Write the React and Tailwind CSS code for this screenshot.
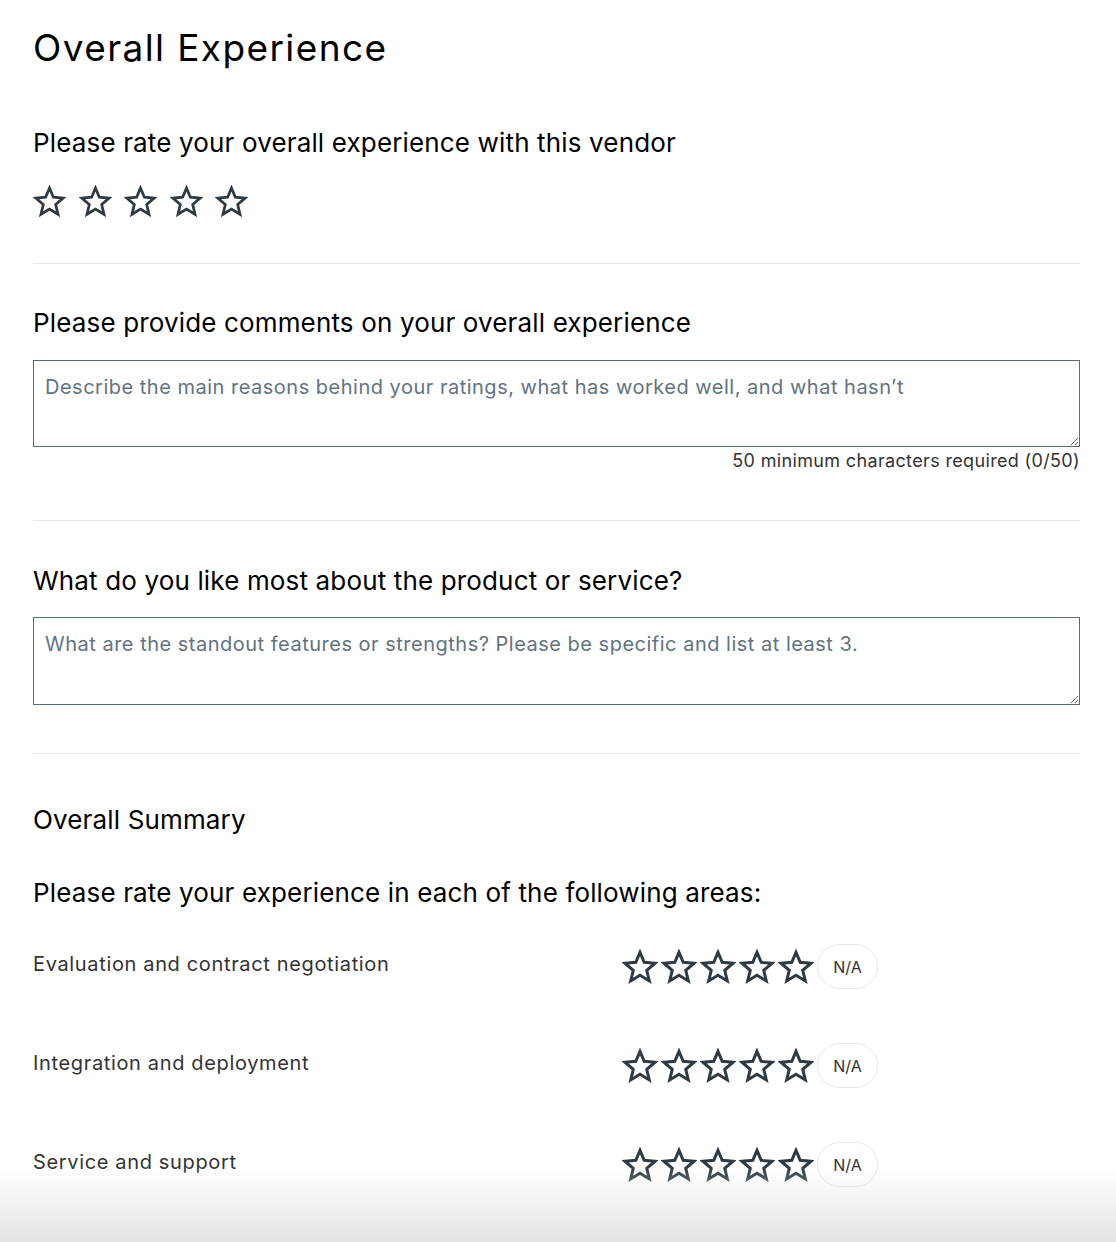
import React from 'react';

function StarIcon({ className }) {
  return (
    <svg viewBox="0 0 24 24" className={className} fill="none">
      <polygon
        points="12,2.2 14.8,8.9 22,9.5 16.5,14.2 18.2,21.3 12,17.5 5.8,21.3 7.5,14.2 2,9.5 9.2,8.9"
        stroke="#2f3b42"
        strokeWidth="2"
        strokeLinejoin="miter"
      />
    </svg>
  );
}

const areas = [
  'Evaluation and contract negotiation',
  'Integration and deployment',
  'Service and support',
  'Product capabilities',
];

export default function App() {
  return (
    <div className="relative min-h-screen bg-white text-black" style={{ fontFamily: 'Inter, "Noto Sans", sans-serif' }}>
      <div className="px-[33px] pr-[36px] pt-[26px] pb-20">
        <h1 className="text-[37px] leading-[44px] font-normal tracking-[1.4px]">Overall Experience</h1>

        <section className="pt-[57px] pb-[45px] border-b border-[#e8e8e8]">
          <h2 className="text-[26px] leading-[32px] tracking-[0.15px]">Please rate your overall experience with this vendor</h2>
          <div className="flex gap-[12.5px] mt-[26px]">
            {[0, 1, 2, 3, 4].map((i) => (
              <StarIcon key={i} className="w-[33px] h-[33px]" />
            ))}
          </div>
        </section>

        <section className="pt-[43px] pb-[46px] border-b border-[#e8e8e8]">
          <h2 className="text-[26px] leading-[32px] tracking-[0.15px]">Please provide comments on your overall experience</h2>
          <textarea
            className="block w-full h-[87px] mt-[21px] border border-[#5b6c7a] px-[11px] py-[12px] text-[20px] leading-[28px] tracking-[0.5px] text-[#333] placeholder-[#62737f] outline-none resize-y"
            placeholder="Describe the main reasons behind your ratings, what has worked well, and what hasn’t"
          />
          <p className="text-right text-[18px] leading-[26px] tracking-[0.35px] text-[#333] mt-[1px]">50 minimum characters required (0/50)</p>
        </section>

        <section className="pt-[44px] pb-[48px] border-b border-[#e8e8e8]">
          <h2 className="text-[26px] leading-[32px] tracking-[0.15px]">What do you like most about the product or service?</h2>
          <textarea
            className="block w-full h-[88px] mt-[20px] border border-[#5b6c7a] px-[11px] py-[12px] text-[20px] leading-[28px] tracking-[0.5px] text-[#333] placeholder-[#62737f] outline-none resize-y"
            placeholder="What are the standout features or strengths? Please be specific and list at least 3."
          />
        </section>

        <section className="pt-[50px]">
          <h3 className="text-[26px] leading-[32px] tracking-[0.15px]">Overall Summary</h3>
          <h2 className="text-[26px] leading-[32px] tracking-[0.15px] mt-[41px]">Please rate your experience in each of the following areas:</h2>
          <div className="mt-[35px] flex flex-col gap-[54px]">
            {areas.map((a) => (
              <div key={a} className="flex items-start">
                <div className="w-[589px] text-[20px] leading-[28px] tracking-[0.65px] text-[#333] pt-[6px]">{a}</div>
                <div className="flex items-center">
                  <div className="flex gap-[3px]">
                    {[0, 1, 2, 3, 4].map((i) => (
                      <StarIcon key={i} className="w-[36px] h-[36px]" />
                    ))}
                  </div>
                  <button className="ml-[3px] w-[61px] h-[45px] rounded-full border border-[#e6e8eb] text-[16px] text-[#333]">
                    N/A
                  </button>
                </div>
              </div>
            ))}
          </div>
        </section>
      </div>
      <div className="fixed left-0 right-0 bottom-0 h-[76px] bg-gradient-to-b from-white/0 to-[#e4e4e4] pointer-events-none" />
    </div>
  );
}
